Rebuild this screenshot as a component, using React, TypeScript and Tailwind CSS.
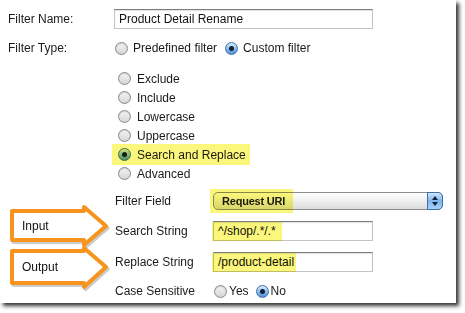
function Radio({ checked = false }: { checked?: boolean }) {
  if (checked) {
    return (
      <span className="w-[13px] h-[13px] shrink-0 rounded-full border border-[#3f6fa8] bg-linear-to-b from-[#d9ecfd] via-[#8dbff0] to-[#4f8fd6] flex items-center justify-center">
        <span className="w-[5px] h-[5px] rounded-full bg-[#142033]" />
      </span>
    );
  }
  return (
    <span className="w-[13px] h-[13px] shrink-0 rounded-full border border-[#8a8a8a] bg-linear-to-b from-[#f4f4f4] to-[#d6d6d6] shadow-[inset_0_1px_1px_rgba(0,0,0,0.15)]" />
  );
}

function TextBox({ value, width }: { value: string; width: string }) {
  return (
    <div
      className={`${width} h-[20px] border border-[#c4c4c4] border-t-[#7d7d7d] bg-white flex items-center pl-[4px] text-[12px] text-[#111] shadow-[inset_0_1px_1px_rgba(0,0,0,0.12)]`}
    >
      {value}
    </div>
  );
}

function Highlight({ className }: { className: string }) {
  return <span className={`absolute bg-[#fbf77c] mix-blend-multiply pointer-events-none ${className}`} />;
}

const filterOptions = ["Exclude", "Include", "Lowercase", "Uppercase", "Search and Replace", "Advanced"];

export default function App() {
  return (
    <div
      className="relative w-[465px] h-[313px] bg-white overflow-hidden text-[12px] text-[#1a1a1a]"
      style={{ fontFamily: '"Liberation Sans", Arial, sans-serif' }}
    >
      <div className="w-[456px] h-[303px] bg-white shadow-[3px_3px_4px_rgba(0,0,0,0.8)] flex flex-col">
        {/* Filter Name */}
        <div className="flex items-center mt-[9px] h-[20px]">
          <span className="w-[114px] pl-[8px]">Filter Name:</span>
          <TextBox value="Product Detail Rename" width="w-[259px]" />
        </div>

        {/* Filter Type */}
        <div className="flex items-center mt-[10px] h-[18px]">
          <span className="w-[115px] pl-[8px]">Filter Type:</span>
          <Radio />
          <span className="ml-[5px]">Predefined filter</span>
          <span className="ml-[8px]">
            <Radio checked />
          </span>
          <span className="ml-[5px]">Custom filter</span>
        </div>

        {/* Custom filter options */}
        <div className="flex flex-col mt-[12px] pl-[118px]">
          {filterOptions.map((opt) => (
            <div key={opt} className="relative flex items-center h-[19px]">
              {opt === "Search and Replace" && <Highlight className="-left-[6px] -top-[1px] w-[138px] h-[21px]" />}
              <Radio checked={opt === "Search and Replace"} />
              <span className="ml-[6px]">{opt}</span>
            </div>
          ))}
        </div>

        {/* Filter Field */}
        <div className="flex items-center mt-[9px] h-[18px] pl-[115px]">
          <span className="w-[98px]">Filter Field</span>
          <div className="relative w-[230px] h-[18px] rounded-[5px] border border-[#8c8c8c] bg-linear-to-b from-[#ffffff] via-[#eeeeee] to-[#dcdcdc] flex items-center overflow-visible">
            <span className="pl-[8px] text-[11px] font-bold tracking-[-0.2px] text-[#1a1a1a]">Request URI</span>
            <span className="ml-auto w-[16px] h-[18px] -mr-px -my-px rounded-r-[5px] border border-[#3f6fa8] bg-linear-to-b from-[#cfe6fd] via-[#7fb4ec] to-[#a9d2fb] flex flex-col items-center justify-center gap-[2px]">
              <svg width="6" height="4" viewBox="0 0 6 4"><path d="M3 0 L6 4 L0 4 Z" fill="#10223a" /></svg>
              <svg width="6" height="4" viewBox="0 0 6 4"><path d="M0 0 L6 0 L3 4 Z" fill="#10223a" /></svg>
            </span>
            <Highlight className="-left-[4px] -top-[4px] w-[83px] h-[24px]" />
          </div>
        </div>

        {/* Search String */}
        <div className="flex items-center mt-[11px] h-[20px] pl-[115px]">
          <span className="w-[98px]">Search String</span>
          <div className="relative">
            <TextBox value="^/shop/.*/.*" width="w-[160px]" />
            <Highlight className="-left-[1px] top-[1px] w-[70px] h-[19px]" />
          </div>
        </div>

        {/* Replace String */}
        <div className="flex items-center mt-[11px] h-[20px] pl-[115px]">
          <span className="w-[98px]">Replace String</span>
          <div className="relative">
            <TextBox value="/product-detail" width="w-[160px]" />
            <Highlight className="-left-[1px] top-[1px] w-[84px] h-[19px]" />
          </div>
        </div>

        {/* Case Sensitive */}
        <div className="flex items-center mt-[10px] h-[18px] pl-[115px]">
          <span className="w-[99px]">Case Sensitive</span>
          <Radio />
          <span className="ml-[2px]">Yes</span>
          <span className="ml-[7px]">
            <Radio checked />
          </span>
          <span className="ml-[2px]">No</span>
        </div>
      </div>

      {/* Annotation arrows */}
      <svg className="absolute left-0 top-[195px]" width="120" height="100" viewBox="0 0 120 100">
        <g transform="translate(1.5 2)" opacity="0.3">
          <path d="M12 16 H84 V12 L106 31 L84 50 V45 H12 Z" fill="none" stroke="#555" strokeWidth="4" strokeLinejoin="round" />
          <path d="M12 56 H84 V53 L106 72 L84 92 V88 H12 Z" fill="none" stroke="#555" strokeWidth="4" strokeLinejoin="round" />
        </g>
        <path d="M12 16 H84 V12 L106 31 L84 50 V45 H12 Z" fill="#fff" stroke="#f7941d" strokeWidth="4" strokeLinejoin="round" />
        <path d="M12 56 H84 V53 L106 72 L84 92 V88 H12 Z" fill="#fff" stroke="#f7941d" strokeWidth="4" strokeLinejoin="round" />
        <text x="22" y="35" fontSize="12" fill="#111" fontFamily="Liberation Sans, Arial, sans-serif">Input</text>
        <text x="22" y="76" fontSize="12" fill="#111" fontFamily="Liberation Sans, Arial, sans-serif">Output</text>
      </svg>
    </div>
  );
}
